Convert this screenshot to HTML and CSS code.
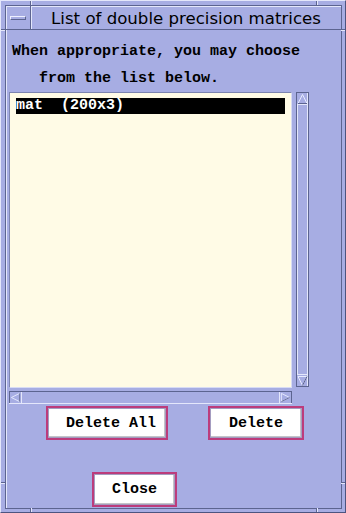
FILE: index.html
```html
<!DOCTYPE html>
<html lang="en">
<head>
  <meta charset="UTF-8">
  <title>List of double precision matrices</title>
  <link rel="stylesheet" href="styles.css">
</head>
<body>
<div class="frame">
  <span class="tick tick-top tick-l"></span>
  <span class="tick tick-top tick-r"></span>
  <span class="tick tick-bottom tick-l"></span>
  <span class="tick tick-bottom tick-r"></span>
  <span class="tick tick-left tick-t"></span>
  <span class="tick tick-left tick-b"></span>
  <span class="tick tick-right tick-t"></span>
  <span class="tick tick-right tick-b"></span>

  <div class="window">
    <div class="titlebar">
      <div class="menu-btn"><span class="menu-bar"></span></div>
      <div class="title">List of double precision matrices</div>
    </div>

    <div class="content">
      <p class="prompt">When appropriate, you may choose<br>   from the list below.</p>

      <div class="list-area">
        <div class="listbox">
          <div class="item selected">mat  (200x3)</div>
        </div>

        <div class="vscroll">
          <div class="arrow arrow-v">
            <svg width="11" height="12" viewBox="0 0 11 12"><polygon points="5.5,1.5 10,10.5 1,10.5" fill="#a7ade3" stroke="#e8ecff" stroke-width="1"/><line x1="1" y1="10.5" x2="10" y2="10.5" stroke="#5c6490"/></svg>
          </div>
          <div class="track"></div>
          <div class="arrow arrow-v arrow-down">
            <svg width="11" height="12" viewBox="0 0 11 12"><polygon points="1,1.5 10,1.5 5.5,10.5" fill="#a7ade3" stroke="#e8ecff" stroke-width="1"/><line x1="10" y1="1.5" x2="5.5" y2="10.5" stroke="#5c6490"/></svg>
          </div>
        </div>

        <div class="hscroll">
          <div class="arrow arrow-h">
            <svg width="12" height="11" viewBox="0 0 12 11"><polygon points="1.5,5.5 10.5,1 10.5,10" fill="#a7ade3" stroke="#e8ecff" stroke-width="1"/><line x1="10.5" y1="1" x2="10.5" y2="10" stroke="#5c6490"/></svg>
          </div>
          <div class="track"></div>
          <div class="arrow arrow-h arrow-right">
            <svg width="12" height="11" viewBox="0 0 12 11"><polygon points="1.5,1 10.5,5.5 1.5,10" fill="#a7ade3" stroke="#e8ecff" stroke-width="1"/><line x1="10.5" y1="5.5" x2="1.5" y2="10" stroke="#5c6490"/></svg>
          </div>
        </div>
      </div>

      <div class="actions">
        <button class="btn btn-all">Delete All</button>
        <button class="btn btn-del">Delete</button>
      </div>

      <div class="close-row">
        <button class="btn btn-close">Close</button>
      </div>
    </div>
  </div>
</div>
</body>
</html>
```

FILE: styles.css
```css
* {
  box-sizing: border-box;
}

body {
  margin: 0;
  background: #a7ade3;
  font-family: "Liberation Mono", monospace;
}

.frame {
  position: relative;
  width: 346px;
  height: 513px;
  padding: 4px 3px 3px 4px;
  border-top: 1px solid #e4e7fb;
  border-left: 1px solid #e4e7fb;
  border-right: 1px solid #4c5480;
  border-bottom: 1px solid #4c5480;
  background: #a7ade3;
}

/* resize marks in the frame */
.tick {
  position: absolute;
  background: #5c6490;
}
.tick-top, .tick-bottom {
  width: 1px;
  height: 4px;
  box-shadow: 1px 0 0 #e4e7fb;
}
.tick-top { top: 0; }
.tick-bottom { bottom: 0; }
.tick-top.tick-l, .tick-bottom.tick-l { left: 29px; }
.tick-top.tick-r, .tick-bottom.tick-r { left: 315px; }
.tick-left, .tick-right {
  height: 1px;
  width: 4px;
  box-shadow: 0 1px 0 #e4e7fb;
}
.tick-left { left: 0; }
.tick-right { right: 0; }
.tick-left.tick-t, .tick-right.tick-t { top: 28px; }
.tick-left.tick-b, .tick-right.tick-b { top: 481px; }

.window {
  height: 504px;
  display: flex;
  flex-direction: column;
  border: 1px solid #5c6490;
  box-shadow: inset 1px 1px 0 #e4e7fb;
}

.titlebar {
  display: flex;
  height: 24px;
  border-bottom: 1px solid #5c6490;
}

.menu-btn {
  width: 25px;
  border-right: 1px solid #5c6490;
  display: flex;
  align-items: center;
  justify-content: center;
}

.menu-bar {
  display: block;
  width: 16px;
  height: 4px;
  margin-top: 1px;
  border-top: 1px solid #eef0ff;
  border-left: 1px solid #eef0ff;
  border-bottom: 1px solid #5c6490;
  border-right: 1px solid #5c6490;
}

.title {
  flex: 1;
  text-align: center;
  font-family: "DejaVu Sans", sans-serif;
  font-size: 16.6px;
  line-height: 24px;
  padding-top: 1px;
  color: #000;
  box-shadow: inset 1px 0 0 #e4e7fb;
}

.content {
  flex: 1;
  padding: 8px 0 0 3px;
}

.prompt {
  margin: 0;
  padding-left: 3px;
  font-size: 15px;
  font-weight: bold;
  line-height: 27px;
  white-space: pre;
  color: #000;
}

.list-area {
  display: grid;
  grid-template-columns: 283px 13px;
  grid-template-rows: 296px 13px;
  column-gap: 4px;
  row-gap: 3px;
}

.listbox {
  background: #fffbe6;
  border-top: 1px solid #7c84b0;
  border-left: 1px solid #7c84b0;
  border-right: 1px solid #d8dcf4;
  border-bottom: 1px solid #d8dcf4;
  padding: 5px 6px;
}

.item {
  font-size: 15px;
  font-weight: bold;
  line-height: 16px;
  height: 16px;
  white-space: pre;
}

.selected {
  background: #000;
  color: #fff;
}

.vscroll {
  display: flex;
  flex-direction: column;
  height: 295px;
  border-left: 1px solid #5c6490;
  border-right: 1px solid #5c6490;
  box-shadow: inset -1px 0 0 #e4e7fb;
}

.hscroll {
  display: flex;
  grid-column: 1;
  border-top: 1px solid #5c6490;
  border-bottom: 1px solid #e4e7fb;
}

.track {
  flex: 1;
}

.vscroll .track {
  border-left: 1px solid #e4e7fb;
}

.arrow {
  display: flex;
  align-items: center;
  justify-content: center;
}

.arrow-v {
  height: 13px;
  border-top: 1px solid #5c6490;
  border-bottom: 1px solid #e4e7fb;
}

.arrow-down {
  border-top: 1px solid #e4e7fb;
  border-bottom: 1px solid #5c6490;
}

.arrow-h {
  width: 13px;
  border-left: 1px solid #5c6490;
  border-right: 1px solid #e4e7fb;
}

.arrow-right {
  border-left: 1px solid #e4e7fb;
  border-right: 1px solid #5c6490;
}

.actions {
  display: flex;
  gap: 40px;
  margin-top: 2px;
  padding-left: 37px;
}

.btn {
  height: 34px;
  padding: 0;
  background: #fff;
  border: 2px solid #bc3c7c;
  box-shadow: inset 0 0 0 1px #a49cc0, inset -2px -2px 0 #c4c4c8;
  font-family: "Liberation Mono", monospace;
  font-size: 15px;
  font-weight: bold;
  color: #000;
  text-align: center;
}

.btn-all {
  width: 122px;
  padding-left: 8px;
}

.btn-del {
  width: 96px;
}

.close-row {
  margin-top: 32px;
  padding-left: 83px;
}

.btn-close {
  width: 85px;
  height: 35px;
}
```
